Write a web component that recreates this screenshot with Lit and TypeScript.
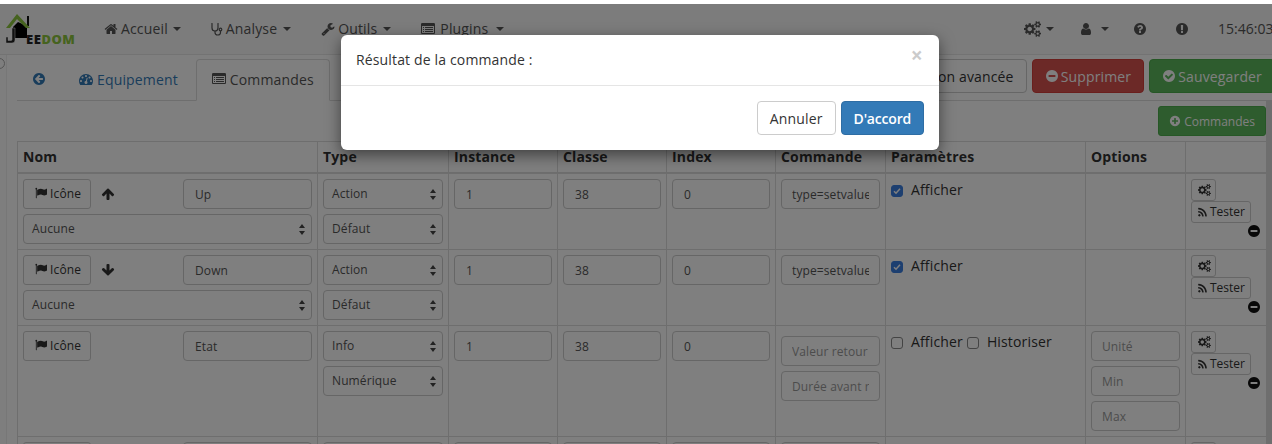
import { LitElement, html, css } from "lit";
import { customElement } from "lit/decorators.js";

const DISC = "q0 209-103 385.5t-279.5 279.5-385.5 103-385.5-103-279.5-279.5-103-385.5 103-385.5 279.5-279.5 385.5-103 385.5 103 279.5 279.5 103 385.5z";
const COG_S = "v140q0 16-149 31-12 27-30 52 51 113 51 138 0 4-4 7-122 71-124 71-8 0-46-47t-52-68q-20 2-30 2t-30-2q-14 21-52 68t-46 47q-2 0-124-71-4-3-4-7 0-25 51-138-18-25-30-52-149-15-149-31v-140q0-16 149-31 13-29 30-52-51-113-51-138 0-4 4-7 4-2 35-20t59-34 30-16q8 0 46 46.5t52 67.5q20-2 30-2t30 2q51-71 92-112l6-2q4 0 124 70 4 3 4 7 0 25-51 138 17 23 30 52 149 15 149 31z";
const LINE = "v64q0 13-9.5 22.5t-22.5 9.5h-960q-13 0-22.5-9.5t-9.5-22.5v-64q0-13 9.5-22.5t22.5-9.5h960q13 0 22.5 9.5t9.5 22.5z";
const BUL = "v64q0 13-9.5 22.5t-22.5 9.5h-64q-13 0-22.5-9.5t-9.5-22.5v-64q0-13 9.5-22.5t22.5-9.5h64q13 0 22.5 9.5t9.5 22.5z";

const P: Record<string, string> = {
  home: "M1472 992v480q0 26-19 45t-45 19h-384v-384h-256v384h-384q-26 0-45-19t-19-45v-480q0-1 .5-3t.5-3l575-474 575 474q1 2 1 6zm223-69l-62 74q-8 9-21 11h-3q-13 0-21-7l-692-577-692 577q-12 8-24 7-13-2-21-11l-62-74q-8-10-7-23.5t11-21.5l719-599q32-26 76-26t76 26l244 204v-195q0-14 9-23t23-9h192q14 0 23 9t9 23v408l219 182q10 8 11 21.5t-7 23.5z",
  back: "M1408 960v-128q0-26-19-45t-45-19h-502l189-189q19-19 19-45t-19-45l-91-91q-18-18-45-18t-45 18l-362 362-91 91q-18 18-18 45t18 45l91 91 362 362q18 18 45 18t45-18l91-91q18-18 18-45t-18-45l-189-189h502q26 0 45-19t19-45zm256-64" + DISC,
  minus: "M1344 960v-128q0-26-19-45t-45-19h-768q-26 0-45 19t-19 45v128q0 26 19 45t45 19h768q26 0 45-19t19-45zm320-64" + DISC,
  plus: "M1344 960v-128q0-26-19-45t-45-19h-256v-256q0-26-19-45t-45-19h-128q-26 0-45 19t-19 45v256h-256q-26 0-45 19t-19 45v128q0 26 19 45t45 19h256v256q0 26 19 45t45 19h128q26 0 45-19t19-45v-256h256q26 0 45-19t19-45zm320-64" + DISC,
  check: "M1412 734q0-28-18-46l-91-90q-19-19-45-19t-45 19l-408 407-226-226q-19-19-45-19t-45 19l-91 90q-18 18-18 46 0 27 18 45l362 362q19 19 45 19 27 0 46-19l543-543q18-18 18-45zm252 162" + DISC,
  question: "M1024 1376v-192q0-14-9-23t-23-9h-192q-14 0-23 9t-9 23v192q0 14 9 23t23 9h192q14 0 23-9t9-23zm256-672q0-88-55.5-163t-138.5-116-170-41q-243 0-371 213-15 24 8 42l132 100q7 6 19 6 16 0 25-12 53-68 86-92 34-24 86-24 48 0 85.5 26t37.5 59q0 38-20 61t-68 45q-63 28-115.5 86.5t-52.5 125.500v36q0 14 9 23t23 9h192q14 0 23-9t9-23q0-19 21.5-49.5t54.5-49.5q32-18 49-28.5t46-35 44.5-48 28-60.5 12.5-81zm384 192" + DISC,
  excl: "M896 128q209 0 385.500 103t279.500 279.500 103 385.500-103 385.500-279.500 279.500-385.500 103-385.500-103-279.500-279.500-103-385.500 103-385.500 279.500-279.500 385.500-103zm128 1247v-190q0-14-9-23.500t-22-9.500h-192q-13 0-23 10t-10 23v190q0 13 10 23t23 10h192q13 0 22-9.500t9-23.500zm-2-344l18-621q0-12-10-18-10-8-24-8h-220q-14 0-24 8-10 6-10 18l17 621q0 10 10 17.500t24 7.500h185q14 0 23.500-7.500t10.500-17.500z",
  user: "M1536 1399q0 109-62.500 187t-150.500 78h-854q-88 0-150.500-78t-62.500-187q0-85 8.500-160.500t31.500-152 58.500-131 94-89 134.500-34.500q131 128 313 128t313-128q76 0 134.500 34.500t94 89 58.500 131 31.500 152 8.500 160.500zm-256-887q0 159-112.500 271.500t-271.500 112.500-271.500-112.500-112.500-271.500 112.500-271.500 271.500-112.500 271.500 112.500 112.500 271.500z",
  up: "M1675 971q0 51-37 90l-75 75q-38 38-91 38-54 0-90-38l-294-293v704q0 52-37.500 84.500t-90.500 32.500h-128q-53 0-90.500-32.500t-37.500-84.500v-704l-294 293q-36 38-90 38t-90-38l-75-75q-38-38-38-90 0-53 38-91l651-651q35-37 90-37 54 0 91 37l651 651q37 39 37 91z",
  down: "M1675 832q0 53-37 90l-651 652q-39 37-91 37-53 0-90-37l-651-652q-38-36-38-90 0-53 38-91l74-75q39-37 91-37 53 0 90 37l294 294v-704q0-52 38-90t90-38h128q52 0 90 38t38 90v704l294-294q37-37 90-37 52 0 91 37l75 75q37 39 37 91z",
  flag: "M320 256q0 72-64 110v1266q0 13-9.500 22.500t-22.500 9.500h-64q-13 0-22.500-9.500t-9.500-22.500v-1266q-64-38-64-110 0-53 37.500-90.500t90.500-37.500 90.500 37.500 37.500 90.500zm1472 64v763q0 25-12.500 38.500t-39.500 27.500q-215 116-369 116-61 0-123.500-22t-108.500-48-115.500-48-142.500-22q-192 0-464 146-17 9-33 9-26 0-45-19t-19-45v-742q0-32 31-55 21-14 79-43 236-120 421-120 107 0 200 29t219 88q38 19 88 19 54 0 117.500-21t110-47 88-47 54.500-21q26 0 45 19t19 45z",
  wrench: "M448 1472q0-26-19-45t-45-19-45 19-19 45 19 45 45 19 45-19 19-45zm644-420l-682 682q-37 37-90 37-52 0-91-37l-106-108q-38-36-38-90 0-53 38-91l681-681q39 98 114.500 173.500t173.500 114.500zm634-435q0 39-23 106-47 134-164.500 217.500t-258.500 83.500q-185 0-316.500-131.500t-131.500-316.500 131.500-316.500 316.500-131.500q58 0 121.500 16.500t107.500 46.500q16 11 16 28t-16 28l-293 169v224l193 107q5-3 79-48.500t135.500-81 70.500-35.500q15 0 23.500 10t8.500 25z",
  rss: "M576 1344q0 80-56 136t-136 56-136-56-56-136 56-136 136-56 136 56 56 136zm512 123q2 28-17 48-18 21-47 21h-135q-25 0-43-16.500t-20-41.500q-22-229-184.500-391.500t-391.500-184.500q-25-2-41.500-20t-16.500-43v-135q0-29 21-47 17-17 43-17h5q160 13 306 80.500t259 181.500q114 113 181.500 259t80.500 306zm512 2q2 27-18 47-18 20-46 20h-143q-26 0-44.500-17.500t-19.500-42.500q-12-215-101-408.500t-231.500-336-336-231.500-408.500-102q-25-1-42.500-19.500t-17.500-43.500v-143q0-28 20-46 18-18 44-18h3q262 13 501.500 120t425.500 294q187 186 294 425.500t120 501.500z",
  list: "M384 1184" + BUL + "m0-256" + BUL + "m0-256" + BUL + "m1152 512" + LINE + "m0-256" + LINE + "m0-256" + LINE + "m128 704v-832q0-13-9.500-22.500t-22.500-9.500h-1472q-13 0-22.500 9.500t-9.500 22.500v832q0 13 9.500 22.500t22.500 9.500h1472q13 0 22.500-9.500t9.500-22.500zm128-1088v1088q0 66-47 113t-113 47h-1472q-66 0-113-47t-47-113v-1088q0-66 47-113t113-47h1472q66 0 113 47t47 113z",
  gauge: "M384 1152q0-53-37.500-90.500t-90.500-37.500-90.500 37.500-37.500 90.500 37.500 90.500 90.500 37.500 90.500-37.500 37.500-90.500zm192-448q0-53-37.500-90.500t-90.500-37.500-90.500 37.500-37.500 90.500 37.500 90.500 90.500 37.500 90.500-37.500 37.500-90.500zm428 481l101-382q6-26-7.500-48.500t-38.500-29.500-48 6.500-30 39.500l-101 382q-60 5-107 43.500t-63 98.500q-20 77 20 146t117 89 146-20 89-117q16-60-6-117t-72-91zm660-33q0-53-37.500-90.500t-90.500-37.500-90.500 37.500-37.500 90.500 37.500 90.500 90.500 37.500 90.500-37.500 37.500-90.500zm-640-640q0-53-37.500-90.500t-90.500-37.500-90.500 37.500-37.500 90.500 37.500 90.500 90.500 37.500 90.500-37.500 37.500-90.500zm448 192q0-53-37.500-90.500t-90.500-37.500-90.500 37.500-37.500 90.500 37.500 90.500 90.500 37.500 90.500-37.500 37.500-90.500zm320 448q0 261-141 483-19 29-54 29h-1402q-35 0-54-29-141-221-141-483 0-182 71-348t191-286 286-191 348-71 348 71 286 191 191 286 71 348z",
  cogs: "M896 896q0-106-75-181t-181-75-181 75-75 181 75 181 181 75 181-75 75-181zm768 512q0-52-38-90t-90-38-90 38-38 90q0 53 37.500 90.500t90.500 37.500 90.500-37.500 37.500-90.500zm0-1024q0-52-38-90t-90-38-90 38-38 90q0 53 37.500 90.500t90.500 37.500 90.500-37.500 37.500-90.500zm-384 421v185q0 10-7 19.500t-16 10.500l-155 24q-11 35-32 76 34 48 90 115 7 11 7 20 0 12-7 19-23 30-82.500 89.500t-78.500 59.500q-11 0-21-7l-115-90q-37 19-77 31-11 108-23 155-7 24-30 24h-186q-11 0-20-7.500t-10-17.500l-23-153q-34-10-75-31l-118 89q-7 7-20 7-11 0-21-8-144-133-144-160 0-9 7-19 10-14 41-53t47-61q-23-44-35-82l-152-24q-10-1-17-9.500t-7-19.500v-185q0-10 7-19.500t16-10.500l155-24q11-35 32-76-34-48-90-115-7-11-7-20 0-12 7-20 22-30 82-89t79-59q11 0 21 7l115 90q34-18 77-32 11-108 23-154 7-24 30-24h186q11 0 20 7.500t10 17.500l23 153q34 10 75 31l118-89q8-7 20-7 11 0 21 8 144 133 144 160 0 8-7 19-12 16-42 54t-45 60q23 48 34 82l152 23q10 2 17 10.500t7 19.500zm640 533" + COG_S + "m0-1024" + COG_S,
};

const ico = (name: string, size = 14, vbw = 1792) =>
  html`<svg class="ico" width=${(size * vbw) / 1792} height=${size} viewBox="0 0 ${vbw} 1792" fill="currentColor" aria-hidden="true"><path d=${P[name]}></path></svg>`;

const cogs = (size = 14) => ico("cogs", size, 1920);

const stetho = html`<svg class="ico" width="12" height="14" viewBox="0 0 12 14" fill="none" stroke="currentColor" stroke-width="1.2" aria-hidden="true"><path d="M1.500 1.500H1V6c0 2 1.300 3 3 3s3-1 3-3V1.500h-.5"></path><path d="M4 9v1.500C4 12 5 13 6.800 13S9.500 12 9.500 10.500V9"></path><circle cx="9.500" cy="7.500" r="1.300"></circle></svg>`;

const updown = html`<svg class="updown" width="6" height="11" viewBox="0 0 6 11" fill="currentColor" aria-hidden="true"><path d="M3 0l3 4H0z"></path><path d="M3 11l3-4H0z"></path></svg>`;

const logo = html`<svg class="logo" width="30" height="36" viewBox="0 0 30 36" aria-hidden="true">
  <path d="M22 7 h2 v10 h-2 z" fill="#111"></path>
  <path d="M8 18 L13 13 L22 17 V29 H8 Z" fill="#000"></path>
  <path d="M1 19 L12 5 L25 19 H21 L12 10 L5 19 Z" fill="#8cc63f"></path>
  <path d="M7 19 h3 V31 q0 3-3 3 H1 v-6 h2 v3.500 h3 q1 0 1-1 z" fill="#222" stroke="#f8f8f8" stroke-width=".5"></path>
</svg>`;

type Row = {
  name: string;
  arrow?: string;
  sub?: string;
  type: string;
  subtype: string;
  cmd: string[];
  info: boolean;
};

const rows: Row[] = [
  { name: "Up", arrow: "up", sub: "Aucune", type: "Action", subtype: "Défaut", cmd: ["type=setvalue"], info: false },
  { name: "Down", arrow: "down", sub: "Aucune", type: "Action", subtype: "Défaut", cmd: ["type=setvalue"], info: false },
  { name: "Etat", type: "Info", subtype: "Numérique", cmd: [], info: true },
];

@customElement("app-root")
export class AppRoot extends LitElement {
  static styles = css`
    :host {
      display: block;
      width: 1272px;
      height: 444px;
      overflow: hidden;
      position: relative;
      background: #fff;
      font-family: "Open Sans", "Liberation Sans", sans-serif;
      font-size: 14px;
      letter-spacing: .15px;
      color: #333;
    }
    * { box-sizing: border-box; }
    .ico { display: block; flex: none; }
    .strip { height: 4px; background: #fff; }
    .nav {
      height: 51px;
      background: #f8f8f8;
      border-bottom: 1px solid #e7e7e7;
      display: flex;
      align-items: center;
      color: #555;
      padding-bottom: 1px;
    }
    .brand { width: 89px; height: 100%; position: relative; flex: none; display: flex; align-items: flex-end; padding: 0 0 8px 26px; }
    .logo { position: absolute; left: 5px; top: 5px; }
    .brand-text { font-weight: 800; font-size: 13px; letter-spacing: 0.55px; line-height: 12px; color: #222; position: relative; }
    .brand-text b { color: #8cc63f; font-weight: 800; }
    .menu { display: flex; align-items: center; padding: 0 15px; gap: 3px; white-space: nowrap; }
    .menu.wide { gap: 5px; }
    .caret { width: 0; height: 0; border-left: 4px solid transparent; border-right: 4px solid transparent; border-top: 4px solid currentColor; margin-left: 3px; }
    .menu.first .caret { margin-left: 2px; }
    .spacer { flex: 1; }
    .right-menu { display: flex; align-items: center; white-space: nowrap; }
    .rm { display: flex; align-items: center; gap: 2px; }
    .rm.cog { width: 55px; }
    .rm.usr { width: 54px; gap: 5px; }
    .rm.q { width: 42px; }
    .rm.e { width: 43px; }
    .clock { width: 54px; letter-spacing: 0; }
    .layout { display: flex; align-items: stretch; height: 389px; }
    .aside { width: 7px; flex: none; border-right: 1px solid #eee; background: #fdfdfd; position: relative; overflow: hidden; }
    .aside::before { content: ""; position: absolute; left: -6px; top: 3px; width: 9px; height: 9px; border: 1px solid #aaa; border-radius: 50%; }
    .main { flex: 1; min-width: 0; }
    .tabs-row {
      margin-left: 10px;
      height: 46px;
      display: flex;
      padding-top: 4px;
      border-bottom: 1px solid #ddd;
      white-space: nowrap;
    }
    .tab { display: flex; align-items: center; gap: 4px; height: 42px; padding: 0 16px 2px; color: #337ab7; margin-right: 2px; border-radius: 4px 4px 0 0; }
    .tab.back { padding: 0 17px 2px 15px; margin-right: 0; }
    .tab.active { color: #555; background: #fff; border: 1px solid #ddd; border-bottom-color: #fff; padding: 0 15px 2px; }
    .actions { margin-left: auto; display: flex; gap: 5px; height: 34px; margin-right: -3px; }
    .actions .btn { gap: 2px; }
    .btn { display: flex; align-items: center; gap: 3px; border: 1px solid #ccc; border-radius: 4px; padding: 0 12px; background: #fff; color: #333; white-space: nowrap; }
    .btn-danger { background: #d9534f; border-color: #d43f3a; color: #fff; }
    .btn-success { background: #5cb85c; border-color: #4cae4c; color: #fff; }
    .body { display: flex; }
    .content { width: 1259px; flex: none; padding-left: 10px; }
    .scroll { flex: 1; background: #dcdcdc; }
    .tools { display: flex; justify-content: flex-end; padding: 5px 0 5px; }
    .btn-sm { height: 30px; font-size: 12px; padding: 0 10px; border-radius: 3px; letter-spacing: 0; }
    table { border-collapse: separate; border-spacing: 0; table-layout: fixed; width: 1249px; border-right: 1px solid #ddd; border-top: 1px solid #ddd; }
    th { text-align: left; font-size: 14px; font-weight: 700; height: 31px; padding: 0 5px 2px; border-left: 1px solid #ddd; border-bottom: 1px solid #ddd; vertical-align: middle; }
    td { padding: 5px; border-left: 1px solid #ddd; border-top: 1px solid #ddd; vertical-align: top; }
    .c1 { width: 300px; }
    .c2 { width: 131px; }
    .c3 { width: 109px; }
    .c6 { width: 110px; }
    .c7 { width: 200px; }
    .c8 { width: 100px; }
    .c9 { width: 81px; }
    .stack { display: flex; flex-direction: column; gap: 5px; }
    .name-top { display: flex; align-items: center; }
    .name-top input { margin-left: auto; width: 129px; }
    .arrow { margin-left: 10px; color: #333; }
    .ctl-btn { height: 30px; width: 68px; font-size: 12px; padding: 0 0 2px 11px; gap: 3px; border-radius: 3px; }
    input, .select {
      display: block;
      width: 100%;
      height: 30px;
      border: 1px solid #ccc;
      border-radius: 4px;
      background: #fff;
      font-family: inherit;
      font-size: 12px;
      letter-spacing: .1px;
      color: #555;
      margin: 0;
    }
    input { padding: 0 10px 0 11px; outline: none; }
    input.flush { padding: 0 10px; }
    input::placeholder { color: #999; opacity: 1; }
    .select { display: flex; align-items: center; justify-content: space-between; padding: 0 6px 2px 8px; }
    .select .updown { margin-top: 2px; }
    .updown { color: #444; }
    .cmd-offset { padding-top: 5px; }
    .params { display: flex; align-items: center; height: 20px; }
    .cb { width: 12px; height: 12px; border: 1px solid #888; border-radius: 3px; background: #fff; flex: none; display: flex; align-items: center; justify-content: center; margin-top: 4px; }
    .cb.on { background: #3b7fe0; border-color: #3b7fe0; }
    .plabel { margin-left: 8px; margin-right: 4px; }
    .act { display: flex; flex-direction: column; align-items: flex-start; }
    .mini { height: 22px; font-size: 12px; border-radius: 3px; padding: 0 5px 2px; gap: 2px; letter-spacing: 0; }
    .mini .ico { margin-top: 2px; }
    .mini.gear { width: 25px; padding: 0 0 2px 6px; }
    .del { align-self: flex-end; color: #111; margin-top: 1px; }
    .ghost-btn { height: 30px; width: 68px; border: 1px solid #ccc; border-radius: 3px; }

    .backdrop { position: absolute; left: 0; right: 0; top: 4px; bottom: 0; background: rgba(0,0,0,.5); }
    .modal {
      position: absolute;
      left: 341px;
      top: 35px;
      width: 598px;
      height: 115px;
      background: #fff;
      border-radius: 6px;
      box-shadow: 0 5px 15px rgba(0,0,0,.5);
    }
    .m-head { height: 51px; border-bottom: 1px solid #e5e5e5; padding: 15px; display: flex; justify-content: space-between; align-items: flex-start; }
    .m-title { line-height: 20px; color: #333; }
    .m-x { font-size: 21px; font-weight: 700; color: #000; opacity: .2; line-height: 20px; margin-top: -5px; margin-right: 1px; }
    .m-foot { display: flex; justify-content: flex-end; gap: 5px; padding: 15px 15px 15px; }
    .m-foot .btn { height: 34px; }
    .btn-primary { background: #337ab7; border-color: #2e6da4; color: #fff; font-weight: 600; letter-spacing: -.2px; }
  `;

  private renderRow(r: Row) {
    return html`<tr>
      <td>
        <div class="stack">
          <div class="name-top">
            <div class="btn ctl-btn">${ico("flag", 12)}<span>Icône</span></div>
            ${r.arrow ? html`<span class="arrow">${ico(r.arrow, 14)}</span>` : ""}
            <input .value=${r.name} />
          </div>
          ${r.sub ? html`<div class="select"><span>${r.sub}</span>${updown}</div>` : ""}
        </div>
      </td>
      <td>
        <div class="stack">
          <div class="select"><span>${r.type}</span>${updown}</div>
          <div class="select"><span>${r.subtype}</span>${updown}</div>
        </div>
      </td>
      <td><input value="1" /></td>
      <td><input value="38" /></td>
      <td><input value="0" /></td>
      <td>
        ${r.info
          ? html`<div class="stack cmd-offset">
              <input class="flush" placeholder="Valeur retour" />
              <input class="flush" placeholder="Durée avant retour" />
            </div>`
          : html`<input class="flush" .value=${r.cmd[0]} />`}
      </td>
      <td>
        <div class="params">
          ${r.info
            ? html`<span class="cb"></span><span class="plabel">Afficher</span><span class="cb"></span><span class="plabel">Historiser</span>`
            : html`<span class="cb on"><svg width="8" height="8" viewBox="0 0 8 8" fill="none" stroke="#fff" stroke-width="1.500" aria-hidden="true"><path d="M1 4.200l2 2 4-4.500"></path></svg></span><span class="plabel">Afficher</span>`}
        </div>
      </td>
      <td>
        ${r.info
          ? html`<div class="stack">
              <input class="flush" placeholder="Unité" />
              <input class="flush" placeholder="Min" />
              <input class="flush" placeholder="Max" />
            </div>`
          : ""}
      </td>
      <td>
        <div class="act">
          <div class="btn mini gear">${cogs(12)}</div>
          <div class="btn mini">${ico("rss", 11)}<span>Tester</span></div>
          <span class="del">${ico("minus", 14)}</span>
        </div>
      </td>
    </tr>`;
  }

  /* The next row only peeks in at the bottom edge: just the tops of its controls show. */
  private renderPeekRow() {
    return html`<tr>
      <td><div class="name-top"><div class="ghost-btn"></div><input /></div></td>
      <td><div class="select"></div></td>
      <td><input /></td>
      <td><input /></td>
      <td><input /></td>
      <td><input /></td>
      <td></td>
      <td></td>
      <td><div class="btn mini gear"></div></td>
    </tr>`;
  }

  render() {
    const menu = (icon: unknown, label: string, cls = "") =>
      html`<div class="menu ${cls}">${icon}<span>${label}</span><span class="caret"></span></div>`;
    return html`
      <div class="strip"></div>
      <header class="nav">
        <div class="brand">${logo}<span class="brand-text">EE<b>DOM</b></span></div>
        ${menu(ico("home"), "Accueil", "first")}
        ${menu(stetho, "Analyse")}
        ${menu(ico("wrench"), "Outils")}
        ${menu(ico("list"), "Plugins", "wide")}
        <div class="spacer"></div>
        <div class="right-menu">
          <div class="rm cog">${cogs(16)}<span class="caret"></span></div>
          <div class="rm usr">${ico("user", 14)}<span class="caret"></span></div>
          <div class="rm q">${ico("question")}</div>
          <div class="rm e">${ico("excl")}</div>
          <div class="clock">15:46:03</div>
        </div>
      </header>
      <div class="layout">
        <div class="aside"></div>
        <div class="main">
          <div class="tabs-row">
            <div class="tab back">${ico("back")}</div>
            <div class="tab">${ico("gauge")}<span>Equipement</span></div>
            <div class="tab active">${ico("list")}<span>Commandes</span></div>
            <div class="actions">
              <div class="btn">${cogs(14)}<span>Configuration avancée</span></div>
              <div class="btn btn-danger">${ico("minus")}<span>Supprimer</span></div>
              <div class="btn btn-success">${ico("check")}<span>Sauvegarder</span></div>
            </div>
          </div>
          <div class="body">
            <div class="content">
              <div class="tools">
                <div class="btn btn-success btn-sm">${ico("plus", 12)}<span>Commandes</span></div>
              </div>
              <table>
                <thead>
                  <tr>
                    <th class="c1">Nom</th><th class="c2">Type</th><th class="c3">Instance</th>
                    <th class="c3">Classe</th><th class="c3">Index</th><th class="c6">Commande</th>
                    <th class="c7">Paramètres</th><th class="c8">Options</th><th class="c9"></th>
                  </tr>
                </thead>
                <tbody>${rows.map((r) => this.renderRow(r))}${this.renderPeekRow()}</tbody>
              </table>
            </div>
            <div class="scroll"></div>
          </div>
        </div>
      </div>
      <div class="backdrop"></div>
      <div class="modal" role="dialog">
        <div class="m-head">
          <div class="m-title">Résultat de la commande :</div>
          <div class="m-x">×</div>
        </div>
        <div class="m-foot">
          <div class="btn">Annuler</div>
          <div class="btn btn-primary">D'accord</div>
        </div>
      </div>
    `;
  }
}
